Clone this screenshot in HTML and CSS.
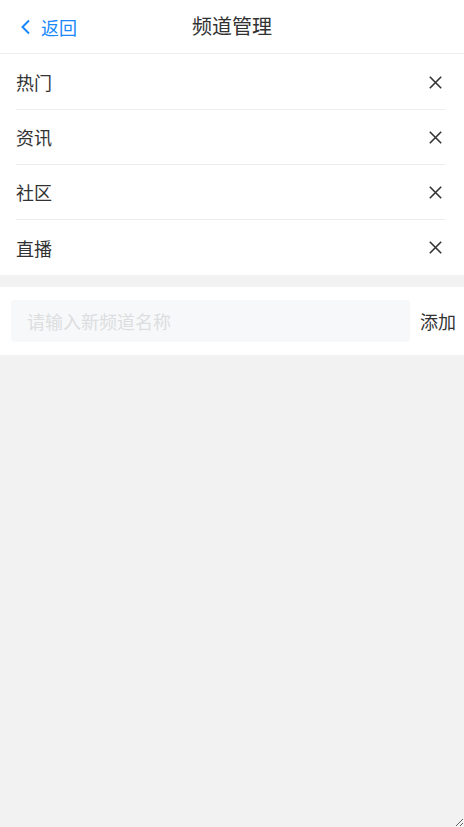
FILE: index.html
```html
<!DOCTYPE html>
<html lang="zh-CN">
<head>
    <meta charset="UTF-8">
    <meta name="viewport" content="width=device-width, initial-scale=1.0">
    <title>频道管理</title>
    <link rel="stylesheet" href="styles.css">
</head>
<body>
    <div class="app">
        <header class="nav">
            <a class="back" href="#">
                <svg width="12" height="16" viewBox="0 0 12 16"><path d="M9 1.5 L2.5 8 L9 14.5" fill="none" stroke="#1989fa" stroke-width="2"/></svg>
                <span>返回</span>
            </a>
            <div class="title">频道管理</div>
        </header>

        <ul class="channels">
            <li><span>热门</span><button class="del" aria-label="删除"><svg width="13" height="13" viewBox="0 0 13 13"><path d="M0.8 0.8 L12.2 12.2 M12.2 0.8 L0.8 12.2" stroke="#333" stroke-width="1.6"/></svg></button></li>
            <li><span>资讯</span><button class="del" aria-label="删除"><svg width="13" height="13" viewBox="0 0 13 13"><path d="M0.8 0.8 L12.2 12.2 M12.2 0.8 L0.8 12.2" stroke="#333" stroke-width="1.6"/></svg></button></li>
            <li><span>社区</span><button class="del" aria-label="删除"><svg width="13" height="13" viewBox="0 0 13 13"><path d="M0.8 0.8 L12.2 12.2 M12.2 0.8 L0.8 12.2" stroke="#333" stroke-width="1.6"/></svg></button></li>
            <li><span>直播</span><button class="del" aria-label="删除"><svg width="13" height="13" viewBox="0 0 13 13"><path d="M0.8 0.8 L12.2 12.2 M12.2 0.8 L0.8 12.2" stroke="#333" stroke-width="1.6"/></svg></button></li>
        </ul>

        <div class="add-bar">
            <input type="text" placeholder="请输入新频道名称">
            <button class="add-btn">添加</button>
        </div>
    </div>
</body>
</html>
```

FILE: styles.css
```css
* {
    box-sizing: border-box;
}

html, body {
    margin: 0;
    padding: 0;
    height: 100%;
}

body {
    font-family: "Noto Sans CJK SC", "Noto Sans", sans-serif;
    background-color: #f2f2f2;
    color: #323233;
}

.app {
    min-height: 100%;
    height: 827px;
    overflow: auto;
    resize: both;
}

.nav {
    position: relative;
    height: 54px;
    background: #fff;
    border-bottom: 1px solid #ebedf0;
    display: flex;
    align-items: center;
    justify-content: center;
}

.back {
    position: absolute;
    left: 20px;
    top: 0;
    height: 53px;
    display: flex;
    align-items: center;
    gap: 9px;
    color: #1989fa;
    text-decoration: none;
    font-size: 18px;
}

.title {
    font-size: 20px;
    color: #323233;
    margin-top: -2px;
}

.channels {
    list-style: none;
    margin: 0;
    padding: 1px 19px 0 16px;
    background: #fff;
}

.channels li {
    height: 55px;
    display: flex;
    align-items: center;
    justify-content: space-between;
    font-size: 18px;
    border-bottom: 1px solid #ebedf0;
}

.channels li:last-child {
    border-bottom: none;
}

.del {
    background: none;
    border: none;
    padding: 0;
    width: 13px;
    height: 13px;
    margin-right: 3px;
    display: flex;
    cursor: pointer;
}

.add-bar {
    margin-top: 12px;
    background: #fff;
    padding: 13px 8px 13px 11px;
    display: flex;
    align-items: center;
    gap: 10px;
}

.add-bar input {
    flex: 1;
    height: 42px;
    border: none;
    border-radius: 4px;
    background: #f7f8fa;
    padding: 0 16px;
    font-family: inherit;
    font-size: 18px;
    color: #323233;
    outline: none;
}

.add-bar input::placeholder {
    color: #dcdee0;
}

.add-btn {
    background: none;
    border: none;
    padding: 0;
    font-family: inherit;
    font-size: 18px;
    color: #323233;
    cursor: pointer;
}
```
